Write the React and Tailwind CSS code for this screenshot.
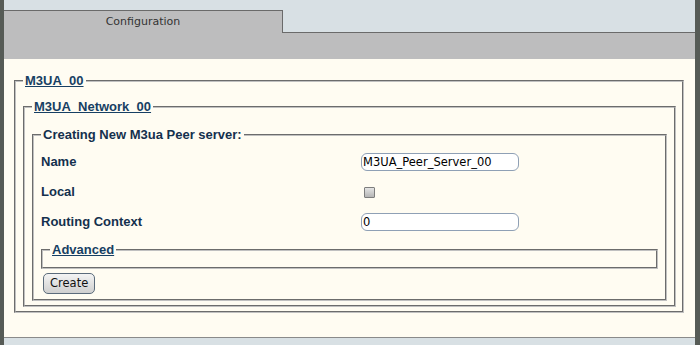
import React from "react";

const groove = "border-2 [border-style:groove] border-[#c0c0c0]";
const legendCls =
  "px-[2px] leading-[16px] text-[13px] font-bold underline text-[#173f63]";

const Row = ({ label, children }) => (
  <div className="flex h-[30px] items-center">
    <div className="w-[320px] text-[13px] font-bold text-[#14304d]">{label}</div>
    {children}
  </div>
);

const TextInput = ({ value }) => (
  <input
    type="text"
    value={value}
    readOnly
    className="h-[18px] w-[158px] rounded-[6px] border border-[#8fa0b5] bg-white px-[1px] text-[11.5px] text-black outline-none [font-family:'DejaVu_Sans',sans-serif]"
  />
);

export default function App() {
  return (
    <div className="flex h-[345px] w-full bg-[#565b56] [font-family:'Liberation_Sans',Arial,sans-serif]">
      <div className="w-[4px]" />
      <div className="flex flex-1 flex-col">
        {/* Tabs */}
        <div className="flex h-[33px] bg-[#d8e0e4]">
          <div className="mt-[10px] flex w-[279px] items-center justify-center border-t border-r border-[#6a6a6a] bg-[#bdbdbe] text-[11px] text-[#333] [font-family:'DejaVu_Sans',sans-serif]">
            Configuration
          </div>
          <div className="flex-1 border-b border-[#6a6a6a]" />
        </div>
        <div className="h-[26px] bg-[#bdbdbe]" />

        {/* Content */}
        <div className="flex-1 bg-[#fffcf2] pt-[14px] pl-[10px] pr-[11px]">
          <fieldset className={`${groove} pl-[7px] pr-[6px] pb-[4px]`}>
            <legend className={legendCls}>M3UA_00</legend>
            <fieldset className={`${groove} mt-[10px] px-[7px] pb-[4px]`}>
              <legend className={legendCls}>M3UA_Network_00</legend>
              <fieldset className={`${groove} mt-[12px] px-[7px] pt-[4px] pb-[5px]`}>
                <legend className="px-[2px] leading-[16px] text-[13px] font-bold text-[#14304d]">
                  Creating New M3ua Peer server:
                </legend>
                <Row label="Name">
                  <TextInput value="M3UA_Peer_Server_00" />
                </Row>
                <Row label="Local">
                  <input
                    type="checkbox"
                    readOnly
                    className="ml-[3px] h-[11px] w-[11px] appearance-none rounded-[1px] border border-[#7d7d7d] bg-linear-to-b from-[#e4e4e4] to-[#b5b5b5]"
                  />
                </Row>
                <Row label="Routing Context">
                  <TextInput value="0" />
                </Row>
                <fieldset className={`${groove} mt-[5px] px-[7px] pb-[9px]`}>
                  <legend className={legendCls}>Advanced</legend>
                </fieldset>
                <button className="mt-[4px] ml-[2px] h-[21px] rounded-[5px] border border-[#5b6b7b] bg-linear-to-b from-[#f4f4f4] to-[#cfcfcf] px-[6px] text-[11.5px] text-[#111] [font-family:'DejaVu_Sans',sans-serif]">
                  Create
                </button>
              </fieldset>
            </fieldset>
          </fieldset>
        </div>
        <div className="h-[8px] border-t border-[#8a8a8a] bg-[#d8e0e4]" />
      </div>
      <div className="w-[5px]" />
    </div>
  );
}
